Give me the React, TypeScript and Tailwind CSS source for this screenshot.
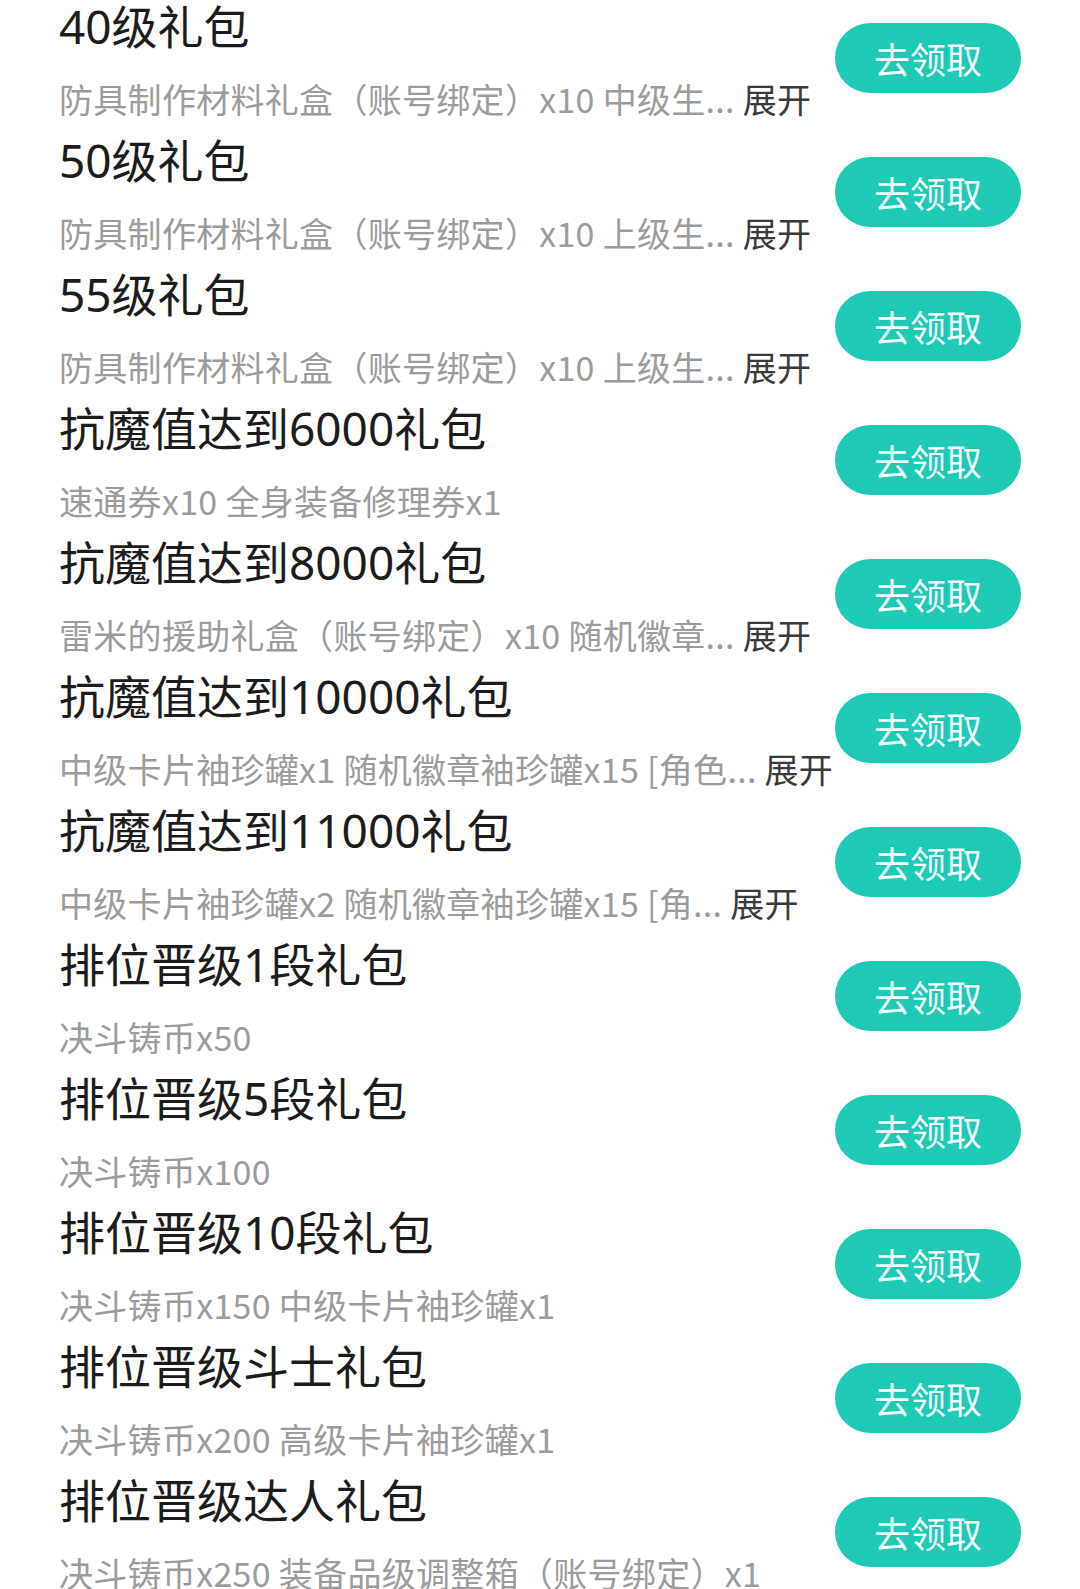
import React from "react";

type Gift = {
    title: string;
    desc: string;
    more?: boolean;
};

const gifts: Gift[] = [
    { title: "40级礼包", desc: "防具制作材料礼盒（账号绑定）x10 中级生...", more: true },
    { title: "50级礼包", desc: "防具制作材料礼盒（账号绑定）x10 上级生...", more: true },
    { title: "55级礼包", desc: "防具制作材料礼盒（账号绑定）x10 上级生...", more: true },
    { title: "抗魔值达到6000礼包", desc: "速通券x10 全身装备修理券x1" },
    { title: "抗魔值达到8000礼包", desc: "雷米的援助礼盒（账号绑定）x10 随机徽章...", more: true },
    { title: "抗魔值达到10000礼包", desc: "中级卡片袖珍罐x1 随机徽章袖珍罐x15 [角色...", more: true },
    { title: "抗魔值达到11000礼包", desc: "中级卡片袖珍罐x2 随机徽章袖珍罐x15 [角...", more: true },
    { title: "排位晋级1段礼包", desc: "决斗铸币x50" },
    { title: "排位晋级5段礼包", desc: "决斗铸币x100" },
    { title: "排位晋级10段礼包", desc: "决斗铸币x150 中级卡片袖珍罐x1" },
    { title: "排位晋级斗士礼包", desc: "决斗铸币x200 高级卡片袖珍罐x1" },
    { title: "排位晋级达人礼包", desc: "决斗铸币x250 装备品级调整箱（账号绑定）x1" },
];

const GiftRow = ({ gift }: { gift: Gift }) => {
    return (
        <div className="flex h-[134px] items-start">
            {/* text side */}
            <div className="flex min-w-0 flex-1 flex-col">
                <div
                    className="text-[46px] leading-[52px] text-[#1c1c1c] whitespace-nowrap"
                    style={{ fontFamily: '"Noto Sans", "Noto Sans CJK SC", sans-serif' }}
                >
                    {gift.title}
                </div>
                <div className="mt-[25px] text-[34px] leading-[44px] tracking-[0.3px] text-[#9b9b9b] whitespace-nowrap">
                    {gift.desc}
                    {gift.more && <span className="text-[#3a3a3a]"> 展开</span>}
                </div>
            </div>

            <button className="mt-[23px] flex h-[70px] w-[186px] shrink-0 items-center justify-center rounded-full bg-[#1ec9b5] text-[36px] text-[#f2fffd]">
                去领取
            </button>
        </div>
    );
};

const App = () => {
    return (
        <div
            className="h-[1589px] w-full overflow-hidden bg-white px-[59px]"
            style={{ fontFamily: '"Noto Sans CJK SC", "Noto Sans", sans-serif' }}
        >
            {gifts.map((g) => (
                <GiftRow key={g.title} gift={g} />
            ))}
        </div>
    );
};

export default App;
